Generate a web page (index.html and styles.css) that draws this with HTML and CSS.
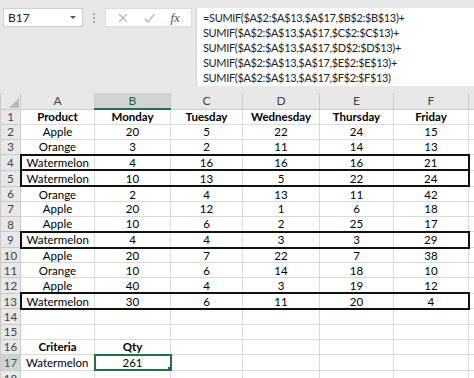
FILE: index.html
```
<!DOCTYPE html>
<html>

<head>
  <meta charset="utf-8">
  <title>SUMIF across columns</title>

  <link rel="stylesheet" href="styles.css">

</head>

<body>

  <div class="top-bar">

    <div class="name-box">
      <span>B17</span>
      <span class="name-arrow"></span>
    </div>

    <div class="bar-dots">
      <span></span><span></span><span></span>
    </div>

    <div class="tool-box">
      <svg width="12" height="12" viewBox="0 0 12 12"><path d="M2 2 L10 10 M10 2 L2 10" stroke="#b5b5b5" stroke-width="1.2" fill="none"/></svg>
      <svg width="13" height="12" viewBox="0 0 13 12"><path d="M1.5 6.5 L5 10 L11.5 2" stroke="#b5b5b5" stroke-width="1.2" fill="none"/></svg>
      <span class="fx">fx</span>
    </div>

    <div class="formula-bar">
      =SUMIF($A$2:$A$13,$A$17,$B$2:$B$13)+<br>
      SUMIF($A$2:$A$13,$A$17,$C$2:$C$13)+<br>
      SUMIF($A$2:$A$13,$A$17,$D$2:$D$13)+<br>
      SUMIF($A$2:$A$13,$A$17,$E$2:$E$13)+<br>
      SUMIF($A$2:$A$13,$A$17,$F$2:$F$13)
    </div>

  </div>

  <table class="sheet">
    <colgroup>
      <col class="col-num"><col class="col-a"><col class="col-b"><col class="col-c"><col class="col-d"><col class="col-e"><col class="col-f"><col class="col-g">
    </colgroup>

    <tr class="head-row">
      <th class="corner"><svg width="10" height="10" viewBox="0 0 10 10"><path d="M10 0 L10 10 L0 10 Z" fill="#b9b9b9"/></svg></th>
      <th>A</th><th class="head-selected">B</th><th>C</th><th>D</th><th>E</th><th>F</th><th></th>
    </tr>

    <tr class="bold-row"><th>1</th><td>Product</td><td>Monday</td><td>Tuesday</td><td>Wednesday</td><td>Thursday</td><td>Friday</td><td></td></tr>
    <tr><th>2</th><td>Apple</td><td>20</td><td>5</td><td>22</td><td>24</td><td>15</td><td></td></tr>
    <tr><th>3</th><td>Orange</td><td>3</td><td>2</td><td>11</td><td>14</td><td>13</td><td></td></tr>
    <tr class="boxed"><th>4</th><td>Watermelon</td><td>4</td><td>16</td><td>16</td><td>16</td><td>21</td><td></td></tr>
    <tr class="boxed"><th>5</th><td>Watermelon</td><td>10</td><td>13</td><td>5</td><td>22</td><td>24</td><td></td></tr>
    <tr><th>6</th><td>Orange</td><td>2</td><td>4</td><td>13</td><td>11</td><td>42</td><td></td></tr>
    <tr><th>7</th><td>Apple</td><td>20</td><td>12</td><td>1</td><td>6</td><td>18</td><td></td></tr>
    <tr><th>8</th><td>Apple</td><td>10</td><td>6</td><td>2</td><td>25</td><td>17</td><td></td></tr>
    <tr class="boxed"><th>9</th><td>Watermelon</td><td>4</td><td>4</td><td>3</td><td>3</td><td>29</td><td></td></tr>
    <tr><th>10</th><td>Apple</td><td>20</td><td>7</td><td>22</td><td>7</td><td>38</td><td></td></tr>
    <tr><th>11</th><td>Orange</td><td>10</td><td>6</td><td>14</td><td>18</td><td>10</td><td></td></tr>
    <tr><th>12</th><td>Apple</td><td>40</td><td>4</td><td>3</td><td>19</td><td>12</td><td></td></tr>
    <tr class="boxed"><th>13</th><td>Watermelon</td><td>30</td><td>6</td><td>11</td><td>20</td><td>4</td><td></td></tr>
    <tr><th>14</th><td></td><td></td><td></td><td></td><td></td><td></td><td></td></tr>
    <tr><th>15</th><td></td><td></td><td></td><td></td><td></td><td></td><td></td></tr>
    <tr class="bold-row"><th>16</th><td>Criteria</td><td>Qty</td><td></td><td></td><td></td><td></td><td></td></tr>
    <tr><th class="num-selected">17</th><td>Watermelon</td><td class="cell-selected">261</td><td></td><td></td><td></td><td></td><td></td></tr>
    <tr><th>18</th><td></td><td></td><td></td><td></td><td></td><td></td><td></td></tr>
  </table>

</body>

</html>
```

FILE: styles.css
```
body {
  margin: 0;
  height: 378px;
  overflow: hidden;
  background: #e8e8e8;
  font-family: Lato, "Liberation Sans", sans-serif;
  color: #000;
}

/* Name box, buttons and the formula bar. */
.top-bar {
  display: flex;
  align-items: flex-start;
  height: 93px;
  box-sizing: border-box;
  padding: 8px 0 0 3px;
}

.name-box {
  width: 80px;
  height: 19px;
  box-sizing: border-box;
  display: flex;
  align-items: center;
  justify-content: space-between;
  padding: 0 6px 0 4px;
  background: white;
  border: 1px solid #cfcfcf;
  font-size: 12px;
  color: #222;
}

.name-arrow {
  width: 0;
  height: 0;
  border-left: 3px solid transparent;
  border-right: 3px solid transparent;
  border-top: 3px solid #555;
}

.bar-dots {
  width: 22px;
  display: flex;
  flex-direction: column;
  align-items: center;
  gap: 2px;
  padding-top: 5px;
}

.bar-dots span {
  width: 2px;
  height: 2px;
  background: #a8a8a8;
}

.tool-box {
  width: 87px;
  height: 19px;
  box-sizing: border-box;
  display: flex;
  align-items: center;
  justify-content: space-around;
  padding: 0 4px;
  background: white;
  border: 1px solid #dcdcdc;
}

.fx {
  font-family: "Liberation Serif", serif;
  font-style: italic;
  font-size: 13px;
  color: #555;
}

.formula-bar {
  flex: 1;
  height: 78px;
  margin-left: 4px;
  box-sizing: border-box;
  padding: 2px 0 0 6px;
  background: white;
  border-left: 1px solid #d6d6d6;
  font-size: 11px;
  letter-spacing: -0.35px;
  line-height: 15px;
  white-space: nowrap;
  color: #222;
}

/* The worksheet grid. */
.sheet {
  border-collapse: collapse;
  table-layout: fixed;
  width: 474px;
  font-size: 11.5px;
}

.col-num { width: 20px; }
.col-a { width: 74px; }
.col-b { width: 76px; }
.col-c { width: 72px; }
.col-d { width: 77px; }
.col-e { width: 74px; }
.col-f { width: 75px; }
.col-g { width: 6px; }

.sheet td,
.sheet th {
  height: 13.85px;
  padding: 0;
  line-height: 13px;
  text-align: center;
  white-space: nowrap;
  overflow: hidden;
}

.sheet td {
  border: 1px solid #dadada;
  background: white;
}

.sheet th {
  font-weight: normal;
  color: #444;
  background: #e8e8e8;
  border: 1px solid #cbcbcb;
}

.head-row th {
  height: 15px;
  border-top: none;
  font-size: 12px;
}

.corner {
  text-align: right;
  vertical-align: bottom;
}

.corner svg {
  display: block;
  margin: 0 1px 1px auto;
}

.head-selected {
  background: #d3d3d3 !important;
  color: #1e6b41 !important;
  border-bottom: 2px solid #217346 !important;
}

.num-selected {
  background: #d3d3d3 !important;
  color: #1e6b41 !important;
}

.bold-row td {
  font-weight: bold;
}

/* Rows outlined with a thick black border. */
.boxed td {
  border-top: 2px solid #111;
  border-bottom: 2px solid #111;
}

.boxed td:nth-child(2) {
  border-left: 2px solid #111;
}

.boxed td:nth-child(7) {
  border-right: 2px solid #111;
}

.boxed td:nth-child(8) {
  border-top: 1px solid #dadada;
  border-bottom: 1px solid #dadada;
}

.cell-selected {
  position: relative;
  border: 2px solid #217346 !important;
}

.cell-selected::after {
  content: "";
  position: absolute;
  right: -4px;
  bottom: -4px;
  width: 5px;
  height: 5px;
  background: #217346;
  border: 1px solid white;
}
```
